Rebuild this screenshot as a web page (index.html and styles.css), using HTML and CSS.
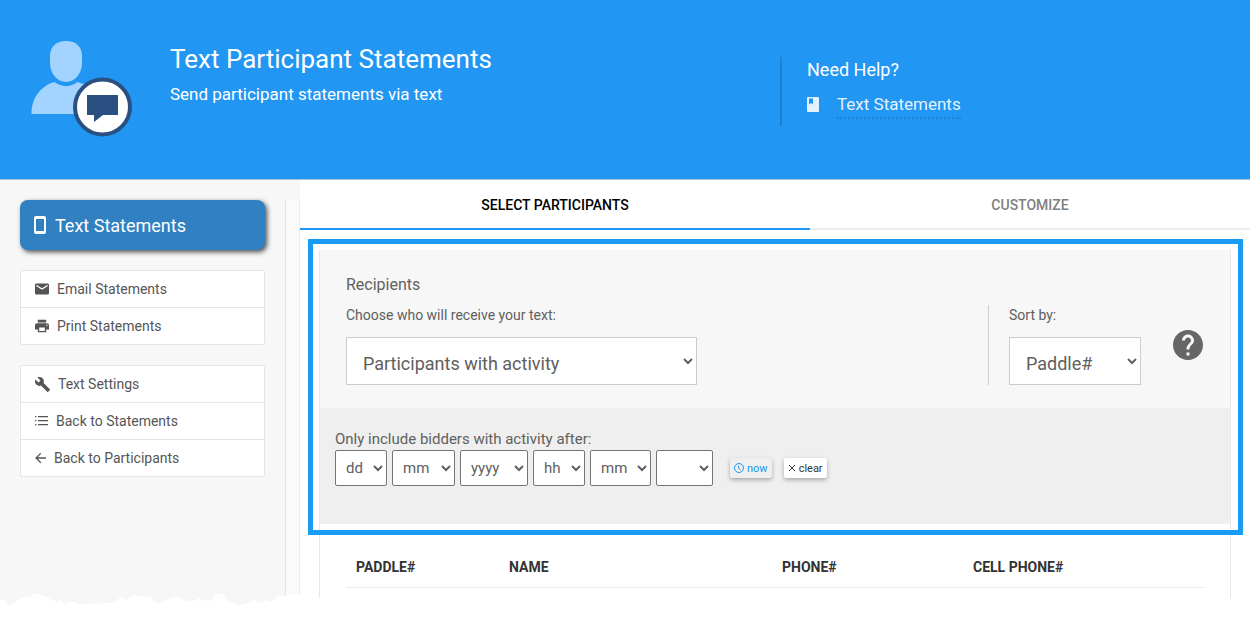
FILE: index.html
```
<!DOCTYPE html>
<html lang="en">
<head>
  <meta charset="UTF-8" />
  <meta name="viewport" content="width=device-width, initial-scale=1.0"/>
  <title>Text Participant Statements</title>
  <link rel="stylesheet" href="styles.css">
</head>
<body>
  <header class="page-header">
    <svg class="header-icon" width="104" height="100" viewBox="0 0 104 100" aria-hidden="true">
      <path fill="#a3d3ff" d="M36 1c10 0 16 6 16 15v7c0 10-7 19-16 19s-16-9-16-19v-7C20 7 26 1 36 1z"/>
      <path fill="#a3d3ff" d="M1.500 74c0-16 9-28 23-32 7 5.500 16 5.500 23 0 8 2 15 7 19 13v19z"/>
      <circle cx="72.500" cy="67" r="27.500" fill="#fff" stroke="#2a5082" stroke-width="4"/>
      <path fill="#2a5082" d="M57 55h31v20H73l-9 7v-7h-7z"/>
    </svg>
    <div class="header-text">
      <h1>Text Participant Statements</h1>
      <p>Send participant statements via text</p>
    </div>
    <div class="help">
      <h2>Need Help?</h2>
      <div class="help-row">
        <svg width="12" height="15" viewBox="0 0 12 15" aria-hidden="true">
          <path fill="#e3f2fe" fill-rule="evenodd" d="M1 0h10q1 0 1 1v13q0 1-1 1H1q-1 0-1-1V1q0-1 1-1zM2 1.500v6l2-1.500 2 1.500v-6z"/>
        </svg>
        <a href="#">Text Statements</a>
      </div>
    </div>
  </header>

  <div class="layout">
    <aside class="sidebar">
      <nav class="side-nav">
        <a class="side-active" href="#">
          <svg width="12" height="18" viewBox="0 0 12 18" aria-hidden="true">
            <path fill="#fff" fill-rule="evenodd" d="M2 0h8q2 0 2 2v14q0 2-2 2H2q-2 0-2-2V2q0-2 2-2zM2 3v12h8V3z"/>
          </svg>
          Text Statements
        </a>
        <ul class="side-group">
          <li><a href="#">
            <svg width="14" height="14" viewBox="2 2 20 20" aria-hidden="true"><path d="M20 4H4c-1.100 0-2 .9-2 2v12c0 1.100.9 2 2 2h16c1.100 0 2-.9 2-2V6c0-1.100-.9-2-2-2zm0 4l-8 5-8-5V6l8 5 8-5v2z"/></svg>
            Email Statements</a></li>
          <li><a href="#">
            <svg width="14" height="14" viewBox="2 2 20 20" aria-hidden="true"><path d="M19 8H5c-1.660 0-3 1.340-3 3v6h4v4h12v-4h4v-6c0-1.660-1.340-3-3-3zm-3 11H8v-5h8v5zm3-7c-.55 0-1-.45-1-1s.45-1 1-1 1 .45 1 1-.45 1-1 1zm-1-9H6v4h12V3z"/></svg>
            Print Statements</a></li>
        </ul>
        <ul class="side-group">
          <li><a href="#">
            <svg width="15" height="15" viewBox="1 1 22 22" aria-hidden="true"><path d="M22.700 19l-9.100-9.100c.9-2.300.4-5-1.500-6.900-2-2-5-2.400-7.400-1.300L9 6 6 9 1.600 4.700C.4 7.100.9 10.100 2.900 12.100c1.900 1.900 4.600 2.400 6.900 1.500l9.100 9.100c.4.4 1 .4 1.400 0l2.300-2.300c.5-.4.5-1.100.1-1.400z"/></svg>
            Text Settings</a></li>
          <li><a href="#">
            <svg width="13" height="13" viewBox="0 0 13 13" aria-hidden="true"><path d="M0 1h1.300v1.300H0zM3 1h10v1.200H3zM0 5h1.300v1.300H0zM3 5h10v1.200H3zM0 9h1.300v1.300H0zM3 9h10v1.200H3z"/></svg>
            Back to Statements</a></li>
          <li><a href="#">
            <svg width="11" height="11" viewBox="0 0 11 11" aria-hidden="true"><path fill="none" stroke="#555" stroke-width="1.300" d="M11 5H1M5.800 .4L1 5l4.800 4.800"/></svg>
            Back to Participants</a></li>
        </ul>
      </nav>
      <div class="gutter"></div>
      <!-- torn paper edge -->
      <svg class="torn-edge" viewBox="0 0 300 14" preserveAspectRatio="none" aria-hidden="true">
        <path fill="#fff" d="M0 6h4l4 5h5l4-4 5-3 10-2 1-2h7l2 2h3l5 3 5 2 3 2 2-3 5 5 4-3h6l2 2h13l9-1 2 2 2-2h12l4-5 2-1 4 3 6-3 3-2 2 1 14 1 6 6h5l5-3 5-2 5-1h4l6 4h8l5-3 7 3h5l5-7h7l4 7h3l6 4h7l6-2 5-3 4 3 4-1 4-2 6 2 7-7 4 2 4-2 13-1v14H0z"/>
      </svg>
    </aside>

    <main class="content">
      <div class="tabs" role="tablist">
        <button class="tab tab-active" role="tab" aria-selected="true">SELECT PARTICIPANTS</button>
        <button class="tab" role="tab" aria-selected="false">CUSTOMIZE</button>
      </div>

      <div class="card">
        <section class="filters">
          <div class="recipients">
            <div class="field">
              <h3>Recipients</h3>
              <label for="recipients">Choose who will receive your text:</label>
              <select id="recipients" class="select-large select-recipients">
                <option>Participants with activity</option>
              </select>
            </div>
            <div class="sort">
              <label for="sort">Sort by:</label>
              <select id="sort" class="select-large select-sort">
                <option>Paddle#</option>
              </select>
            </div>
            <button class="help-button" aria-label="Help">
              <svg width="36" height="36" viewBox="0 0 24 24" aria-hidden="true"><path fill="#666" d="M12 2C6.480 2 2 6.480 2 12s4.480 10 10 10 10-4.480 10-10S17.520 2 12 2zm1 17h-2v-2h2v2zm2.070-7.750l-.9.920C13.450 12.900 13 13.500 13 15h-2v-.5c0-1.100.45-2.100 1.170-2.830l1.240-1.260c.37-.36.59-.86.59-1.410 0-1.100-.9-2-2-2s-2 .9-2 2H8c0-2.210 1.790-4 4-4s4 1.790 4 4c0 .88-.36 1.680-.93 2.250z"/></svg>
            </button>
          </div>

          <fieldset class="activity">
            <legend>Only include bidders with activity after:</legend>
            <div class="date-row">
              <select class="select-2" aria-label="Day"><option>dd</option></select>
              <select class="select-month" aria-label="Month"><option>mm</option></select>
              <select class="select-year" aria-label="Year"><option>yyyy</option></select>
              <select class="select-2" aria-label="Hour"><option>hh</option></select>
              <select class="select-minute" aria-label="Minute"><option>mm</option></select>
              <select class="select-period" aria-label="AM or PM"><option></option><option>AM</option><option>PM</option></select>
              <button class="mini-button now">
                <svg width="10" height="10" viewBox="0 0 10 10" aria-hidden="true"><path fill="none" stroke="#2196f3" d="M5 .5a4.500 4.500 0 1 0 0 9 4.500 4.500 0 1 0 0-9M4.600 2.500v2.800l2 1.500"/></svg>
                now
              </button>
              <button class="mini-button clear">
                <svg width="8" height="8" viewBox="0 0 8 8" aria-hidden="true"><path fill="none" stroke="#333" d="M1 1l6 6M7 1L1 7"/></svg>
                clear
              </button>
            </div>
          </fieldset>
        </section>

        <table class="participants">
          <thead>
            <tr>
              <th class="col-paddle">PADDLE#</th>
              <th class="col-name">NAME</th>
              <th class="col-phone">PHONE#</th>
              <th>CELL PHONE#</th>
            </tr>
          </thead>
        </table>
      </div>
    </main>
  </div>
</body>
</html>
```
FILE: styles.css
```
* {
  box-sizing: border-box;
}

body {
  font-family: Roboto, sans-serif;
  background-color: #fff;
  color: #555;
  font-size: 14px;
  margin: 0;
}

h1, h2, h3, p, ul {
  margin: 0;
  padding: 0;
  font-weight: normal;
}

a {
  color: inherit;
  text-decoration: none;
}

button {
  font-family: inherit;
  border: none;
  cursor: pointer;
}

/* header */

.page-header {
  display: flex;
  align-items: flex-start;
  height: 180px;
  padding: 40px 30px;
  background-color: #2196f3;
  border-bottom: 1px solid #a9c4da;
  color: #fff;
}

.header-text {
  flex: 1;
  padding-left: 36px;
}

.header-text h1 {
  font-size: 26px;
  line-height: 38px;
}

.header-text p {
  font-size: 17px;
  line-height: 32px;
}

.help {
  flex: 0 0 440px;
  margin-top: 17px;
  padding-left: 25px;
  border-left: 2px solid #1e82d2;
}

.help h2 {
  font-size: 18px;
  line-height: 26px;
}

.help-row {
  display: flex;
  align-items: center;
  gap: 18px;
  height: 43px;
}

.help-row a {
  color: #e3f2fe;
  font-size: 17px;
  line-height: 26px;
  border-bottom: 2px dotted #1e82d2;
}

/* sidebar */

.layout {
  display: flex;
}

.sidebar {
  position: relative;
  display: flex;
  flex: 0 0 300px;
  min-height: 428px;
  padding-top: 20px;
  background-color: #f7f7f7;
}

.side-nav {
  width: 286px;
  padding-left: 20px;
  padding-right: 20px;
  border-right: 1px solid #e5e5e5;
}

.gutter {
  flex: 1;
  background-color: #fafafa;
  border-right: 1px solid #ebebeb;
}

.torn-edge {
  position: absolute;
  left: 0;
  bottom: 0;
  width: 100%;
  height: 14px;
}

.side-active {
  display: flex;
  align-items: center;
  gap: 9px;
  height: 50px;
  margin-bottom: 20px;
  padding-left: 14px;
  border-radius: 8px;
  background-color: #3080c2;
  box-shadow: 2px 2px 5px rgba(0, 0, 0, 0.7);
  color: #fff;
  font-size: 18px;
}

.side-group {
  margin-bottom: 20px;
  border: 1px solid #e5e5e5;
  border-radius: 2px;
  background-color: #fff;
  list-style: none;
}

.side-group li + li {
  border-top: 1px solid #e5e5e5;
}

.side-group a {
  display: flex;
  align-items: center;
  gap: 8px;
  height: 36px;
  padding-left: 14px;
}

.side-group svg {
  fill: #555;
}

/* tabs */

.content {
  flex: 1;
  min-width: 0;
}

.tabs {
  display: flex;
  height: 50px;
}

.tab {
  flex: 44;
  padding: 2px 0 0;
  background: none;
  border-bottom: 2px solid #eee;
  color: #808080;
  font-size: 14px;
  font-weight: 500;
}

.tab-active {
  flex: 51;
  border-bottom-color: #2196f3;
  color: #000;
}

/* recipients card */

.card {
  margin: 20px 19px 0;
  padding-bottom: 10px;
  border: 1px solid #e8e8e8;
  border-top: none;
  border-bottom: none;
}

.filters {
  position: relative;
  color: #606060;
}

/* highlight frame, drawn over the card edges */
.filters::after {
  content: "";
  position: absolute;
  inset: -11px -13px -11px -12px;
  border: 5px solid #1a9cf5;
  pointer-events: none;
}

.recipients {
  display: flex;
  align-items: flex-end;
  height: 158px;
  padding: 20px 20px 23px 26px;
  background-color: #f7f7f7;
}

.field {
  flex: 1;
}

.field h3 {
  font-size: 16px;
  line-height: 28px;
  margin-bottom: 6px;
}

.field label,
.sort label {
  display: block;
  line-height: 20px;
  margin-bottom: 12px;
}

select {
  background-color: #fff;
  color: #606060;
  font-family: inherit;
}

.select-large {
  display: block;
  height: 48px;
  padding: 4px 12px 0;
  border: 1px solid #ccc;
  border-radius: 0;
  font-size: 18px;
}

.select-recipients {
  width: 351px;
}

.select-sort {
  width: 132px;
}

.sort {
  padding-left: 20px;
  border-left: 1px solid #ccc;
}

.help-button {
  margin: 0 4px 22px 29px;
  padding: 0;
  background: none;
  line-height: 0;
}

.activity {
  height: 116px;
  margin: 0;
  padding: 20px 15px;
  border: none;
  background-color: #efefef;
}

.activity legend {
  float: left;
  width: 100%;
  padding: 0;
  font-size: 15px;
  line-height: 22px;
}

.date-row {
  display: flex;
  align-items: center;
  gap: 5px;
  clear: both;
}

.date-row select {
  height: 36px;
  padding: 0 6px;
  border: 1px solid #767676;
  border-radius: 2px;
  font-size: 15px;
}

.date-row .select-2 {
  width: 52px;
}

.select-month {
  width: 63px;
}

.select-year {
  width: 68px;
}

.select-minute {
  width: 61px;
}

.select-period {
  width: 57px;
}

.mini-button {
  display: flex;
  align-items: center;
  gap: 3px;
  height: 20px;
  padding: 0 4px;
  border-radius: 2px;
  background-color: #fff;
  box-shadow: 0 2px 4px rgba(0, 0, 0, 0.3);
  color: #333;
  font-size: 11px;
}

.now {
  margin-left: 12px;
  background-color: #efefef;
  color: #2196f3;
}

.clear {
  margin-left: 7px;
}

/* participants table */

.participants {
  width: calc(100% - 52px);
  margin: 23px 26px 0;
  border-collapse: collapse;
  table-layout: fixed;
}

.participants th {
  height: 40px;
  padding: 0 10px;
  border-bottom: 1px solid #ebebeb;
  color: #333;
  font-weight: bold;
  text-align: left;
}

.col-paddle {
  width: 153px;
}

.col-name {
  width: 273px;
}

.col-phone {
  width: 191px;
}
```
